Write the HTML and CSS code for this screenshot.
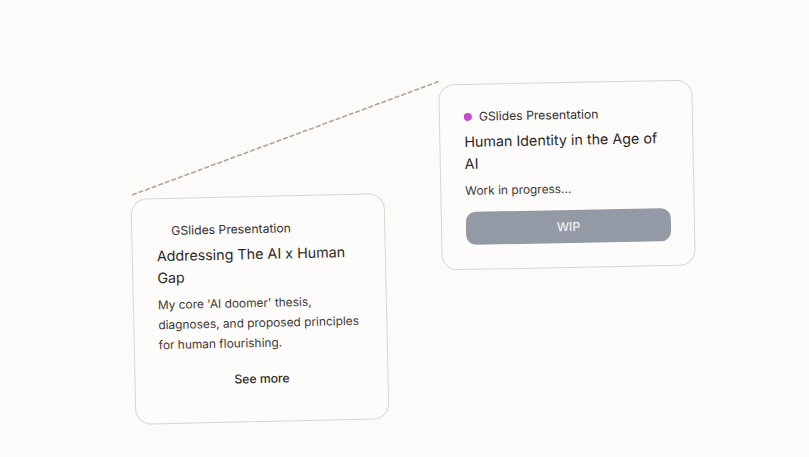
FILE: index.html
```html
<!DOCTYPE html>
<html lang="en">
<head>
<meta charset="utf-8">
<title>Canvas</title>
<link rel="stylesheet" href="styles.css">
</head>
<body>
<div class="canvas">
  <svg class="edges" width="809" height="457" viewBox="0 0 809 457" aria-hidden="true">
    <line x1="132" y1="195" x2="440" y2="81" class="edge"/>
  </svg>

  <div class="card card-left">
    <div class="label"><span class="dot dot-none"></span><span>GSlides Presentation</span></div>
    <h2 class="title">Addressing The AI x Human Gap</h2>
    <p class="desc">My core 'AI doomer' thesis, diagnoses, and proposed principles for human flourishing.</p>
    <button class="see-more">See more</button>
  </div>

  <div class="card card-right">
    <div class="label"><span class="dot dot-purple"></span><span>GSlides Presentation</span></div>
    <h2 class="title">Human Identity in the Age of AI</h2>
    <p class="desc">Work in progress...</p>
    <button class="wip">WIP</button>
  </div>
</div>
</body>
</html>
```

FILE: styles.css
```css
* { box-sizing: border-box; }
html, body {
  margin: 0;
  padding: 0;
  background: #fcfbfa;
  font-family: Inter, "Noto Sans", sans-serif;
  color: #2f2926;
}
.canvas {
  position: relative;
  width: 809px;
  height: 457px;
  overflow: hidden;
}
.edges {
  position: absolute;
  left: 0;
  top: 0;
}
.edge {
  stroke: #b2a596;
  stroke-width: 1.6;
  stroke-dasharray: 5 2;
}
.card {
  position: absolute;
  width: 254px;
  display: flex;
  flex-direction: column;
  padding: 22px 23px 24px 24px;
  background: #fdfcfb;
  border: 1px solid #d9d6d3;
  border-radius: 16px;
}
.card-left {
  left: 133px;
  top: 196px;
  transform: rotate(-1.25deg);
}
.card-right {
  left: 440px;
  top: 82px;
  transform: rotate(-1.1deg);
}
.label {
  display: flex;
  align-items: center;
  gap: 7px;
  font-size: 12.2px;
  line-height: 20px;
  color: #352f2c;
}
.dot {
  width: 8px;
  height: 8px;
  border-radius: 50%;
  flex: none;
}
.dot-none { background: transparent; }
.dot-purple { background: #c54ccf; }
.title {
  margin: 4px 0 0;
  font-size: 14.3px;
  line-height: 22px;
  font-weight: 400;
  color: #2c2623;
}
.desc {
  margin: 6px 0 0;
  font-size: 11.9px;
  line-height: 20px;
  color: #3f3834;
}
.see-more {
  margin-top: 8px;
  padding: 8px;
  border: none;
  background: transparent;
  font-family: inherit;
  font-size: 12.2px;
  line-height: 20px;
  font-weight: 500;
  color: #2f2926;
}
.wip {
  margin-top: 11px;
  height: 33px;
  border: none;
  border-radius: 10px;
  background: #949aa5;
  color: #eef0f3;
  font-family: inherit;
  font-size: 12.2px;
  font-weight: 500;
}
```
